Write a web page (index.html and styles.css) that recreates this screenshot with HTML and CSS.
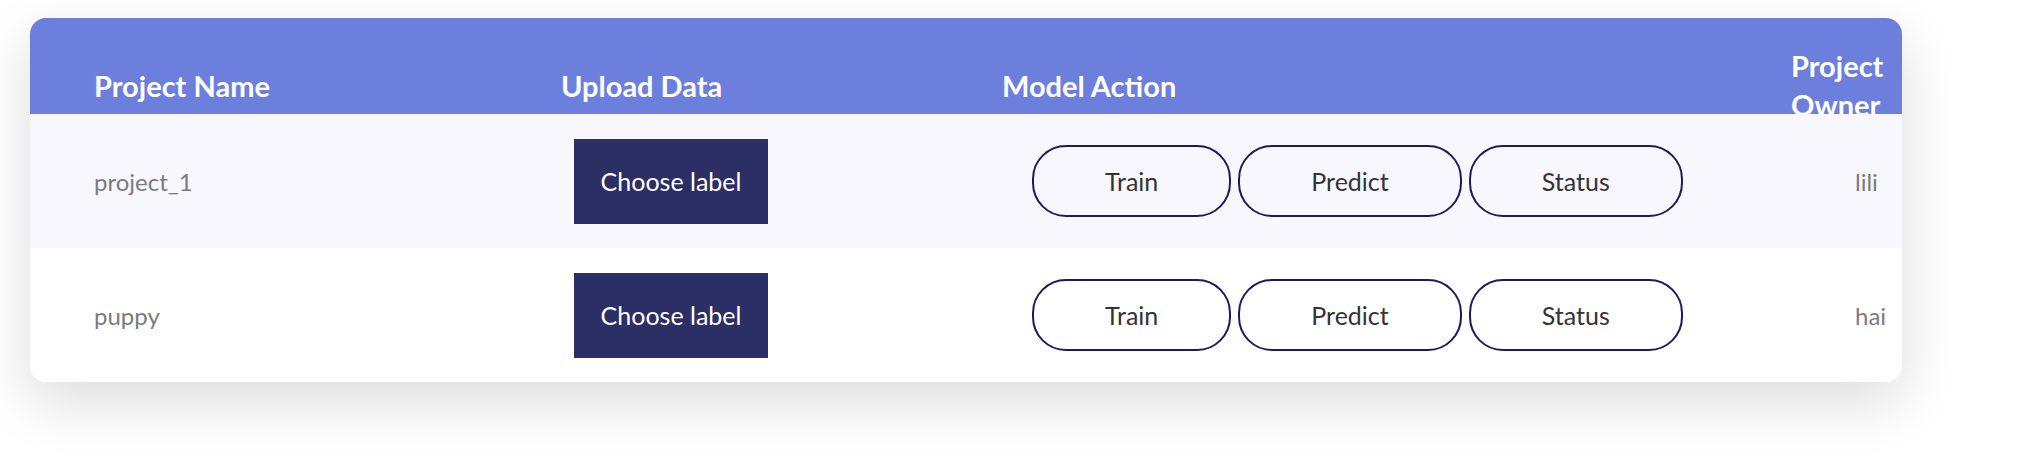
FILE: index.html
```html
<!DOCTYPE html>
<html>
<head>
<meta charset="utf-8">
<link rel="stylesheet" href="styles.css">
</head>
<body>
<div class="card">
  <div class="thead">
    <div class="row hrow">
      <div class="cell c1">Project Name</div>
      <div class="cell c2">Upload Data</div>
      <div class="cell c3">Model Action</div>
      <div class="cell c4">Project Owner</div>
    </div>
  </div>
  <div class="row brow alt">
    <div class="cell c1 name">project_1</div>
    <div class="cell c2"><button class="choose">Choose label</button></div>
    <div class="cell c3 actions"><button class="pill">Train</button><button class="pill">Predict</button><button class="pill">Status</button></div>
    <div class="cell c4 owner">lili</div>
  </div>
  <div class="row brow">
    <div class="cell c1 name">puppy</div>
    <div class="cell c2"><button class="choose">Choose label</button></div>
    <div class="cell c3 actions"><button class="pill">Train</button><button class="pill">Predict</button><button class="pill">Status</button></div>
    <div class="cell c4 owner">hai</div>
  </div>
</div>
</body>
</html>
```
FILE: styles.css
```css
html, body {
  margin: 0;
  padding: 0;
  background: #ffffff;
}
body {
  font-family: Lato, "Liberation Sans", sans-serif;
  padding: 18px 0 80px 30px;
}
.card {
  width: 1872px;
  border-radius: 16px;
  background: #ffffff;
  box-shadow: 0 20px 60px rgba(0, 0, 0, 0.14);
  overflow: hidden;
}
.row {
  display: grid;
  grid-template-columns: 530px 442px 789px 111px;
  align-items: center;
}
.thead {
  height: 96px;
  overflow: hidden;
  background: #6d7fdd;
}
.hrow {
  height: 134px;
  color: #ffffff;
  font-weight: 700;
  font-size: 29px;
  line-height: 39px;
}
.hrow .c1 { padding-left: 64px; }
.hrow .c2 { padding-left: 1px; }
.brow {
  height: 134px;
  background: #ffffff;
}
.brow.alt {
  background: #f8f7fe;
}
.name, .owner {
  font-size: 24px;
  color: #7b7b7b;
}
.brow .c1 { padding-left: 64px; }
.brow .c2 { padding-left: 14px; }
.brow .c3 { padding-left: 30px; }
.brow .c4 { padding-left: 64px; }
.choose {
  width: 194px;
  height: 85px;
  border: none;
  border-radius: 0;
  background: #2c2e66;
  color: #ffffff;
  font-family: Lato, "Liberation Sans", sans-serif;
  font-size: 25px;
  padding: 0;
}
.actions {
  display: flex;
  gap: 7px;
}
.pill {
  height: 72px;
  padding: 0 71px;
  border: 2px solid #1e1960;
  border-radius: 34px;
  background: transparent;
  color: #333333;
  font-family: Lato, "Liberation Sans", sans-serif;
  font-size: 25px;
}
```
